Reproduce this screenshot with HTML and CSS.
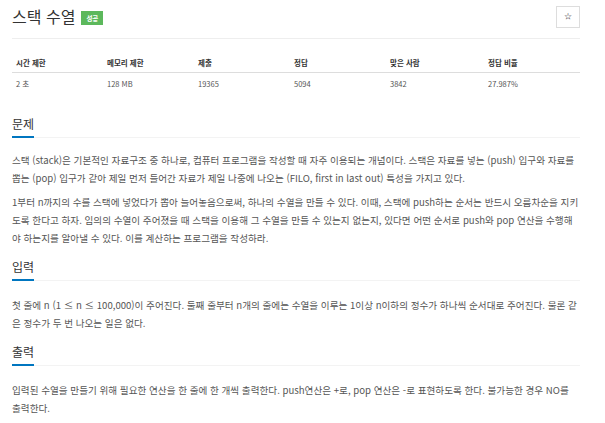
FILE: index.html
```html
<!DOCTYPE html>
<html lang="ko">
<head>
    <meta charset="UTF-8">
    <meta name="viewport" content="width=device-width, initial-scale=1.0">
    <title>스택 수열</title>
    <link rel="stylesheet" href="styles.css">
</head>
<body>

<div class="container">
    <div class="page-header">
        <h1 class="problem-title">스택 수열 <span class="badge">성공</span></h1>
        <button class="star-btn" title="즐겨찾기">&#9734;</button>
    </div>

    <table class="info-table">
        <thead>
            <tr>
                <th class="col1">시간 제한</th>
                <th class="col2">메모리 제한</th>
                <th class="col3">제출</th>
                <th class="col4">정답</th>
                <th class="col5">맞은 사람</th>
                <th>정답 비율</th>
            </tr>
        </thead>
        <tbody>
            <tr>
                <td>2 초</td>
                <td>128 MB</td>
                <td>19365</td>
                <td>5094</td>
                <td>3842</td>
                <td>27.987%</td>
            </tr>
        </tbody>
    </table>

    <section class="problem-section first">
        <div class="headline"><h2><span>문제</span></h2></div>
        <div class="problem-text">
            <p>스택 (stack)은 기본적인 자료구조 중 하나로, 컴퓨터 프로그램을 작성할 때 자주 이용되는 개념이다. 스택은 자료를 넣는 (push) 입구와 자료를 뽑는 (pop) 입구가 같아 제일 먼저 들어간 자료가 제일 나중에 나오는 (FILO, first in last out) 특성을 가지고 있다.</p>
            <p>1부터 n까지의 수를 스택에 넣었다가 뽑아 늘어놓음으로써, 하나의 수열을 만들 수 있다. 이때, 스택에 push하는 순서는 반드시 오름차순을 지키도록 한다고 하자. 임의의 수열이 주어졌을 때 스택을 이용해 그 수열을 만들 수 있는지 없는지, 있다면 어떤 순서로 push와 pop 연산을 수행해야 하는지를 알아낼 수 있다. 이를 계산하는 프로그램을 작성하라.</p>
        </div>
    </section>

    <section class="problem-section">
        <div class="headline"><h2><span>입력</span></h2></div>
        <div class="problem-text">
            <p>첫 줄에 n (1 ≤ n ≤ 100,000)이 주어진다. 둘째 줄부터 n개의 줄에는 수열을 이루는 1이상 n이하의 정수가 하나씩 순서대로 주어진다. 물론 같은 정수가 두 번 나오는 일은 없다.</p>
        </div>
    </section>

    <section class="problem-section">
        <div class="headline"><h2><span>출력</span></h2></div>
        <div class="problem-text">
            <p>입력된 수열을 만들기 위해 필요한 연산을 한 줄에 한 개씩 출력한다. push연산은 +로, pop 연산은 -로 표현하도록 한다. 불가능한 경우 NO를 출력한다.</p>
        </div>
    </section>
</div>

</body>
</html>
```

FILE: styles.css
```css
body {
    margin: 0;
    font-family: "Noto Sans CJK KR", "Noto Sans", sans-serif;
    color: #333;
    background-color: #fff;
}
.container {
    width: 568px;
    margin-left: 12px;
}
.page-header {
    display: flex;
    justify-content: space-between;
    align-items: flex-start;
    height: 38px;
    border-bottom: 1px solid #eee;
}
.problem-title {
    margin: 0;
    padding-top: 5px;
    font-size: 16px;
    font-weight: normal;
    line-height: 22px;
    color: #333;
    display: flex;
    align-items: center;
}
.badge {
    display: inline-block;
    margin-left: 6px;
    margin-top: 4px;
    width: 22px;
    height: 14px;
    line-height: 14px;
    text-align: center;
    background-color: #5cb85c;
    color: #fff;
    font-size: 6.5px;
    font-weight: bold;
}
.star-btn {
    margin-top: 6px;
    width: 24px;
    height: 22px;
    padding: 0;
    background: #fff;
    border: 1px solid #ddd;
    font-size: 8px;
    line-height: 20px;
    color: #333;
    cursor: pointer;
}
.info-table {
    width: 100%;
    margin-top: 13px;
    border-collapse: collapse;
    table-layout: fixed;
    font-size: 7.5px;
}
.info-table th,
.info-table td {
    text-align: left;
    padding: 0 4px;
}
.info-table th {
    height: 20px;
    font-weight: bold;
    color: #333;
    border-bottom: 1px solid #ddd;
}
.info-table td {
    height: 21px;
    color: #555;
}
.col1, .col2 { width: 83px; }
.col3, .col4 { width: 88px; }
.col5 { width: 90px; }
.problem-section {
    margin-top: 6px;
}
.problem-section.first {
    margin-top: 16px;
}
.headline {
    border-bottom: 1px solid #f3f3f3;
}
.headline h2 {
    margin: 0;
    font-size: 12px;
    font-weight: normal;
    line-height: 16px;
    padding-top: 6px;
}
.headline h2 span {
    display: inline-block;
    padding-bottom: 4px;
    border-bottom: 2px solid #0076c0;
    margin-bottom: -1px;
}
.problem-text {
    padding-top: 13px;
    font-size: 9.6px;
    line-height: 18px;
    color: #555;
}
.problem-section + .problem-section .problem-text {
    padding-top: 15px;
}
.problem-text p {
    margin: 0 0 6px 0;
}
```
